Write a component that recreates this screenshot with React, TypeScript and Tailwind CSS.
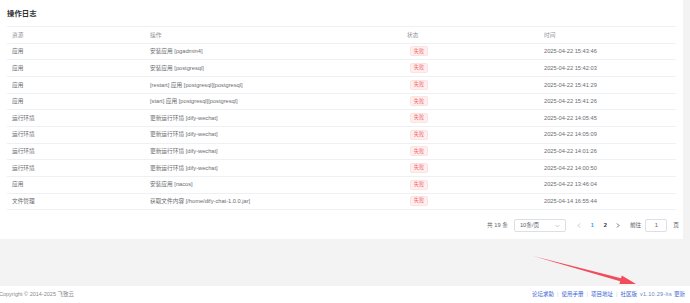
import React from 'react';

const rows = [
  { res: '应用', op: '安装应用 [pgadmin4]', time: '2025-04-22 15:43:46' },
  { res: '应用', op: '安装应用 [postgresql]', time: '2025-04-22 15:42:03' },
  { res: '应用', op: '[restart] 应用 [postgresql][postgresql]', time: '2025-04-22 15:41:29' },
  { res: '应用', op: '[start] 应用 [postgresql][postgresql]', time: '2025-04-22 15:41:26' },
  { res: '运行环境', op: '更新运行环境 [dify-wechat]', time: '2025-04-22 14:05:45' },
  { res: '运行环境', op: '更新运行环境 [dify-wechat]', time: '2025-04-22 14:05:09' },
  { res: '运行环境', op: '更新运行环境 [dify-wechat]', time: '2025-04-22 14:01:26' },
  { res: '运行环境', op: '更新运行环境 [dify-wechat]', time: '2025-04-22 14:00:50' },
  { res: '应用', op: '安装应用 [nacos]', time: '2025-04-22 13:46:04' },
  { res: '文件管理', op: '获取文件内容 [/home/dify-chat-1.0.0.jar]', time: '2025-04-14 16:55:44' },
];

const font = "font-['Liberation_Sans','Noto_Sans_CJK_SC',sans-serif]";
const cols = 'grid grid-cols-[138px_257px_137px_137px]';

export default function App() {
  return (
    <div className={`relative w-[690px] h-[303px] overflow-hidden bg-[#f3f3f4] flex flex-col ${font}`}>
      {/* Card */}
      <div className="h-[286px]">
        <div className="w-[683px] h-[239px] bg-white pl-[7px] pr-[7px] flex flex-col">
          <div className="h-[26px] flex items-center pt-[2px] text-[7.4px] font-bold text-[#303133]">
            操作日志
          </div>

          <div className="border-t border-[#eef0f4] text-[5.7px]">
            <div className={`${cols} h-[16.67px] items-center border-b border-[#eef0f4] text-[#909399]`}>
              <div className="pl-[5px]">资源</div>
              <div className="pl-[5px]">操作</div>
              <div className="pl-[5px]">状态</div>
              <div className="pl-[5px]">时间</div>
            </div>
            {rows.map((r, i) => (
              <div
                key={i}
                className={`${cols} h-[16.67px] items-center border-b border-[#eef0f4] text-[#6a6c70]`}
              >
                <div className="pl-[5px]">{r.res}</div>
                <div className="pl-[5px] whitespace-nowrap">{r.op}</div>
                <div className="pl-[8px]">
                  <span className="inline-flex items-center justify-center w-[18px] h-[10px] rounded-[2px] border border-[#fde2e2] bg-[#fef0f0] text-[#f56c6c] text-[5.2px]">
                    失败
                  </span>
                </div>
                <div className="pl-[5px]">{r.time}</div>
              </div>
            ))}
          </div>

          {/* Pagination */}
          <div className="mt-[9px] -mr-[3px] h-[13px] flex items-center justify-end text-[5.7px] text-[#606266]">
            <span>共 19 条</span>
            <div className="ml-[6px] w-[52px] h-[13px] border border-[#dcdfe6] rounded-[2px] flex items-center justify-between px-[5px]">
              <span>10条/页</span>
              <svg width="5" height="4" viewBox="0 0 10 6" fill="none" stroke="#a8abb2" strokeWidth="1.2">
                <path d="M1 1l4 4 4-4" />
              </svg>
            </div>
            <span className="ml-[7px] w-[13px] flex justify-center">
              <svg width="4" height="5" viewBox="0 0 6 10" fill="none" stroke="#a8abb2" strokeWidth="1.4">
                <path d="M5 1L1 5l4 4" />
              </svg>
            </span>
            <span className="w-[13px] text-center font-bold text-[#409eff]">1</span>
            <span className="w-[13px] text-center font-bold text-[#303133]">2</span>
            <span className="w-[13px] flex justify-center">
              <svg width="4" height="5" viewBox="0 0 6 10" fill="none" stroke="#303133" strokeWidth="1.4">
                <path d="M1 1l4 4-4 4" />
              </svg>
            </span>
            <span className="ml-[5px]">前往</span>
            <div className="ml-[4px] w-[22px] h-[13px] border border-[#dcdfe6] rounded-[2px] flex items-center justify-center">
              1
            </div>
            <span className="ml-[6px]">页</span>
          </div>
        </div>
      </div>

      {/* Footer */}
      <div className="h-[17px] bg-white flex items-center justify-between text-[5.5px] pr-[5px]">
        <span className="text-[#8a8a8a] -ml-[1px]">Copyright © 2014-2025 飞致云</span>
        <div className="flex items-center text-[#3c64d6]">
          <span>论坛求助</span>
          <span className="mx-[3px] text-[#d0d3da]">|</span>
          <span>使用手册</span>
          <span className="mx-[3px] text-[#d0d3da]">|</span>
          <span>项目地址</span>
          <span className="mx-[3px] text-[#d0d3da]">|</span>
          <span>社区版</span>
          <span className="ml-[3px] text-[#6b7fc4] tracking-[0.3px]">v1.10.29-lts</span>
          <span className="ml-[2px]">更新</span>
        </div>
      </div>

      {/* Annotation arrow */}
      <svg className="absolute left-0 top-0 pointer-events-none" width="690" height="303">
        <polygon
          points="533,256 621,278.3 621.8,275.5 636,284 619.4,284.1 620.2,281.2"
          fill="#f24b5b"
        />
      </svg>
    </div>
  );
}
